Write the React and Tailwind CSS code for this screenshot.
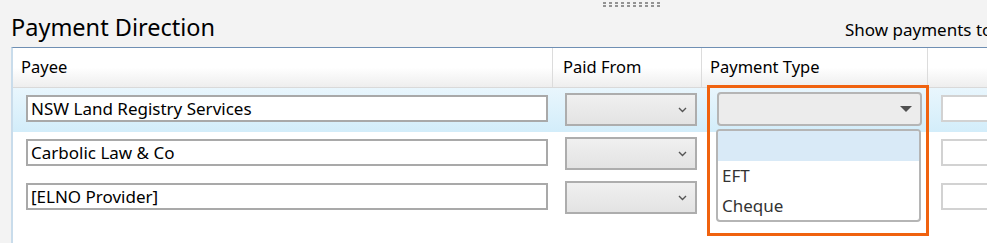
import React from 'react';

const FONT = "font-['Segoe_UI','Noto_Sans',sans-serif]";

const payees = ['NSW Land Registry Services', 'Carbolic Law & Co', '[ELNO Provider]'];

function Grip() {
  return (
    <div className="flex flex-col gap-[1px] pt-[2px]">
      {[0, 1].map((r) => (
        <div key={r} className="flex gap-[3px]">
          {Array.from({ length: 10 }).map((_, i) => (
            <span key={i} className="block w-[3px] h-[2px] bg-[#939393]" />
          ))}
        </div>
      ))}
    </div>
  );
}

function Chevron() {
  return (
    <svg width="9" height="6" viewBox="0 0 9 6" className="text-[#555]">
      <polyline points="1,1 4.5,4.5 8,1" fill="none" stroke="currentColor" strokeWidth="1.4" />
    </svg>
  );
}

function PaidFromCombo() {
  return (
    <div className="w-[132px] h-[33px] border-2 border-[#adadad] bg-gradient-to-b from-[#f0f0f0] to-[#e3e3e3] flex items-center justify-end pr-[8px]">
      <Chevron />
    </div>
  );
}

function Row({ name, selected, index }) {
  return (
    <div
      className={`flex h-[44px] ${
        selected ? 'bg-gradient-to-b from-[#e9f6fd] to-[#d3edfa]' : 'bg-white'
      }`}
    >
      <div className="w-[540px] pl-[13px] pt-[7px] shrink-0">
        <div className="w-[522px] h-[27px] border-2 border-[#a9a9a9] bg-white flex items-center pl-[3px] text-[17px] text-black leading-none">
          {name}
        </div>
      </div>
      <div className="w-[149px] pl-[12px] pt-[5px] shrink-0">
        <PaidFromCombo />
      </div>
      <div className="w-[226px] pl-[15px] pt-[4px] shrink-0">
        {index === 0 && (
          <div className="relative w-[205px] h-[34px] rounded-[4px] border-2 border-[#b5b5b5] bg-[#ececec] flex items-center justify-end pr-[8px]">
            <svg width="12" height="6" viewBox="0 0 12 6">
              <polygon points="0,0 12,0 6,6" fill="#505050" />
            </svg>
          </div>
        )}
      </div>
      <div className="pl-[13px] pt-[7px] shrink-0">
        <div className="w-[60px] h-[27px] border-2 border-[#d2d2d2] bg-white" />
      </div>
    </div>
  );
}

export default function App() {
  return (
    <div className={`relative w-[987px] h-[243px] overflow-hidden bg-[#f3f3f3] ${FONT}`}>
      <div className="relative h-[47px] flex items-end pb-[8px] pl-[11px]">
        <h1 className="w-[834px] shrink-0 text-[23.5px] leading-none text-black">Payment Direction</h1>
        <div className="absolute left-[603px] top-0">
          <Grip />
        </div>
        <div className="mb-[1px] text-[17px] leading-none text-black whitespace-nowrap">
          Show payments to
        </div>
      </div>

      <div className="ml-[11px] border-t border-t-[#6f8fb3] border-l-2 border-l-[#c9dceb] bg-white h-[200px]">
        <div className="flex h-[40px] bg-gradient-to-b from-white via-white to-[#eeeeee] border-b border-[#d9d9d9] text-[16.5px] text-black">
          <div className="w-[540px] shrink-0 border-r border-[#dcdcdc] pl-[8px] flex items-center">Payee</div>
          <div className="w-[149px] shrink-0 border-r border-[#dcdcdc] pl-[10px] flex items-center">Paid From</div>
          <div className="w-[226px] shrink-0 border-r border-[#dcdcdc] pl-[8px] flex items-center">Payment Type</div>
          <div className="flex-1" />
        </div>
        {payees.map((p, i) => (
          <Row key={p} name={p} selected={i === 0} index={i} />
        ))}
      </div>

      {/* open dropdown list */}
      <div className="absolute left-[716px] top-[129px] w-[205px] h-[93px] rounded-[4px] border-2 border-[#b5b5b5] bg-white overflow-hidden text-[17px] text-[#333]">
        <div className="h-[30px] bg-[#d9eaf7]" />
        <div className="h-[30px] pl-[4px] flex items-center">EFT</div>
        <div className="h-[30px] pl-[4px] flex items-center">Cheque</div>
      </div>

      {/* annotation highlight */}
      <div className="absolute left-[707px] top-[85px] w-[222px] h-[151px] border-[3px] border-[#f0620f]" />
    </div>
  );
}
